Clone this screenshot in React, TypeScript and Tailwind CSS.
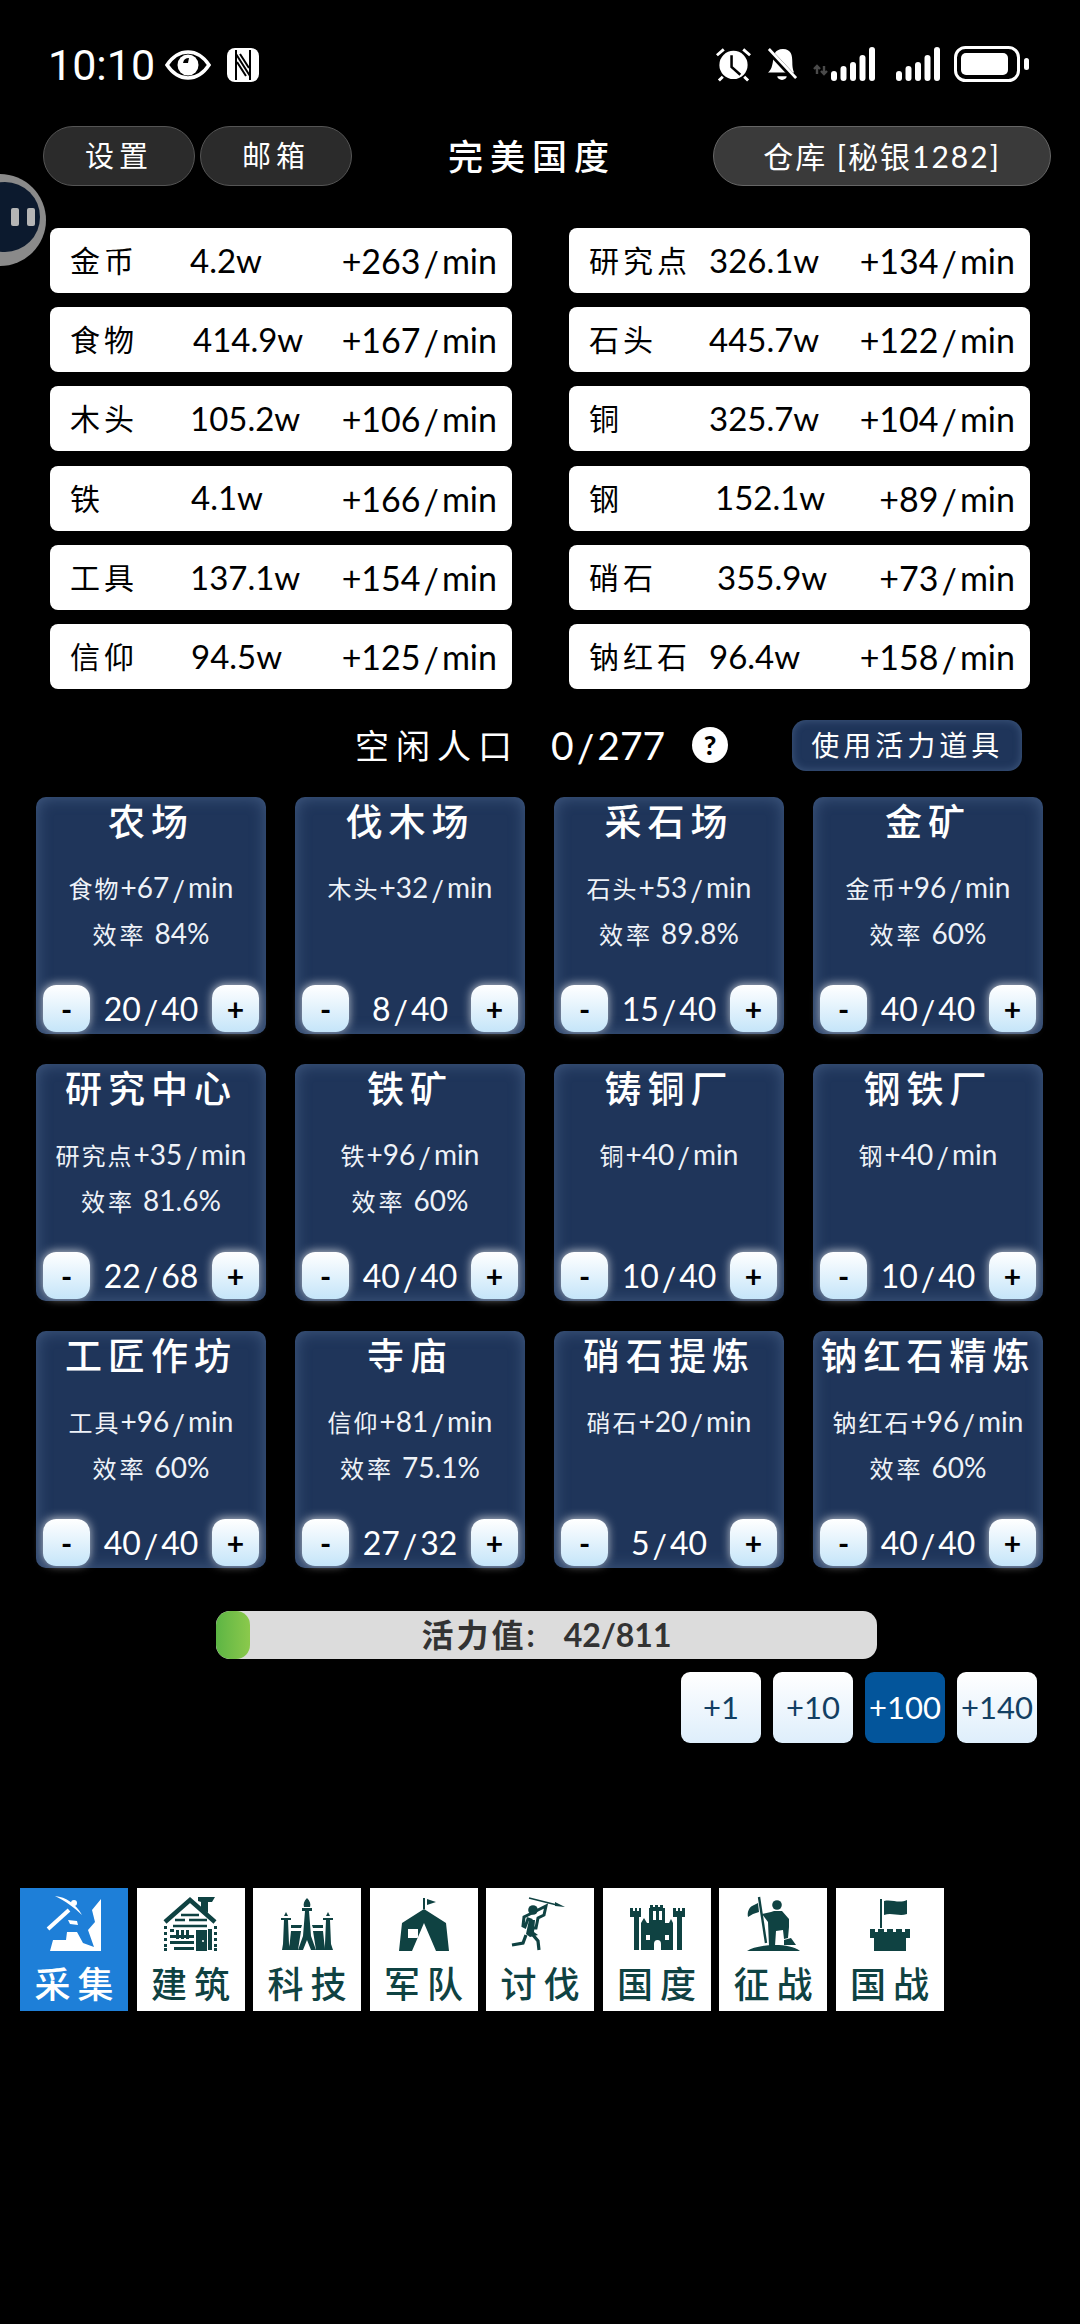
const FONT = "font-['Lato','Noto_Sans_CJK_SC',sans-serif]";

const RESOURCES_LEFT = [
  { name: "金币", value: "4.2w", rate: "+263/min", offset: "w-[120px]" },
  { name: "食物", value: "414.9w", rate: "+167/min", offset: "w-[123px]" },
  { name: "木头", value: "105.2w", rate: "+106/min", offset: "w-[120px]" },
  { name: "铁", value: "4.1w", rate: "+166/min", offset: "w-[121px]" },
  { name: "工具", value: "137.1w", rate: "+154/min", offset: "w-[120px]" },
  { name: "信仰", value: "94.5w", rate: "+125/min", offset: "w-[121px]" },
];

const RESOURCES_RIGHT = [
  { name: "研究点", value: "326.1w", rate: "+134/min", offset: "w-[120px]" },
  { name: "石头", value: "445.7w", rate: "+122/min", offset: "w-[120px]" },
  { name: "铜", value: "325.7w", rate: "+104/min", offset: "w-[120px]" },
  { name: "钢", value: "152.1w", rate: "+89/min", offset: "w-[126px]" },
  { name: "硝石", value: "355.9w", rate: "+73/min", offset: "w-[128px]" },
  { name: "钠红石", value: "96.4w", rate: "+158/min", offset: "w-[120px]" },
];

const BUILDINGS = [
  { title: "农场", res: "食物", rate: "+67/min", eff: "84%", count: "20/40" },
  { title: "伐木场", res: "木头", rate: "+32/min", count: "8/40" },
  { title: "采石场", res: "石头", rate: "+53/min", eff: "89.8%", count: "15/40" },
  { title: "金矿", res: "金币", rate: "+96/min", eff: "60%", count: "40/40" },
  { title: "研究中心", res: "研究点", rate: "+35/min", eff: "81.6%", count: "22/68" },
  { title: "铁矿", res: "铁", rate: "+96/min", eff: "60%", count: "40/40" },
  { title: "铸铜厂", res: "铜", rate: "+40/min", count: "10/40" },
  { title: "钢铁厂", res: "钢", rate: "+40/min", count: "10/40" },
  { title: "工匠作坊", res: "工具", rate: "+96/min", eff: "60%", count: "40/40" },
  { title: "寺庙", res: "信仰", rate: "+81/min", eff: "75.1%", count: "27/32" },
  { title: "硝石提炼", res: "硝石", rate: "+20/min", count: "5/40" },
  { title: "钠红石精炼", res: "钠红石", rate: "+96/min", eff: "60%", count: "40/40" },
];

// the slash in the reference sits wide and dips under the baseline
function Slashed({ text }: { text: string }) {
  const [a, b] = text.split("/");
  return (
    <>
      {a}
      <span className="mx-[3px] inline-block translate-y-[3px]">/</span>
      {b}
    </>
  );
}

function EyeIcon() {
  return (
    <svg width="46" height="30" viewBox="0 0 46 30">
      <path d="M2 15C8 6 15 2 23 2s15 4 21 13c-6 9-13 13-21 13S8 24 2 15z" fill="none" stroke="#fff" strokeWidth="3.5" />
      <circle cx="23" cy="15" r="10.5" fill="#fff" />
      <path d="M18 13a6 6 0 0 1 6-5l-1 5z" fill="#000" />
    </svg>
  );
}

function NfcIcon() {
  return (
    <svg width="32" height="34" viewBox="0 0 32 34">
      <rect width="32" height="34" rx="8" fill="#fff" />
      <path d="M9 2v30M23 2v30M9 6l14 22M10 14l9 14M22 20l-9-14" stroke="#000" strokeWidth="2" fill="none" />
    </svg>
  );
}

function AlarmIcon() {
  return (
    <svg width="37" height="36" viewBox="0 0 38 36">
      <circle cx="19" cy="19" r="14.5" fill="#fff" />
      <path d="M17 9v12l9 8" stroke="#000" strokeWidth="2.6" fill="none" />
      <path d="M2 9l7-6M36 9l-7-6M8 31l-4 4M30 31l4 4" stroke="#fff" strokeWidth="3" fill="none" />
    </svg>
  );
}

function BellIcon() {
  return (
    <svg width="30" height="36" viewBox="0 0 32 36">
      <path d="M7 10c0 0 1-8 10-8s10 7 10 14c0 6 1 9 2 11H1c3-2 5-6 6-17z" fill="#fff" />
      <path d="M11 31h10a5 4 0 0 1-10 0z" fill="#fff" />
      <path d="M1 3l29 31" stroke="#000" strokeWidth="6" />
      <path d="M2 2l29 31" stroke="#fff" strokeWidth="3" />
    </svg>
  );
}

function SignalBars({ arrows }: { arrows?: boolean }) {
  const bars = [
    { x: 0, h: 10 },
    { x: 9.5, h: 15 },
    { x: 19, h: 19 },
    { x: 28.5, h: 26 },
    { x: 38, h: 34 },
  ];
  const left = arrows ? 18 : 0;
  return (
    <svg width={left + 44} height="36" viewBox={`0 0 ${left + 44} 36`}>
      {arrows && <path d="M4 28V20M1 23l3-3 3 3M11 20v8M8 25l3 3 3-3" stroke="#4a4a4a" strokeWidth="2.4" fill="none" />}
      {bars.map((b) => (
        <rect key={b.x} x={left + b.x} y={35 - b.h} width="6" height={b.h} rx="3" fill="#fff" />
      ))}
    </svg>
  );
}

function BatteryIcon() {
  return (
    <svg width="76" height="36" viewBox="0 0 76 36">
      <rect x="1.5" y="1.5" width="63" height="33" rx="10" fill="none" stroke="#fff" strokeWidth="3" />
      <rect x="7" y="7" width="47" height="22" rx="5" fill="#fff" />
      <rect x="70" y="12" width="5" height="12" rx="2.5" fill="#fff" />
    </svg>
  );
}

function PickIcon() {
  return (
    <svg width="108" height="66" viewBox="0 0 108 66" fill="#fff">
      <path d="M81 11V63H30L33 52H46L47 44H57L63 55L74 59L68 42L75 34L72 22z" />
      <path d="M35 8C46 9 56 16 62 27C55 20 45 13 35 8z" />
      <path d="M28 41L49 22" stroke="#fff" strokeWidth="4" />
      <circle cx="54" cy="15" r="3" />
      <path d="M48 32l9 1 1 4-8-1z" />
    </svg>
  );
}

const ICON_FILL = "#0f4242";

function HouseIcon() {
  return (
    <svg width="108" height="66" viewBox="0 0 108 66" fill={ICON_FILL}>
      <path d="M61 9h17l-3 5h-4v11l-7-5v-6l-3-1z" />
      <path d="M28 34L53 12l25 22" fill="none" stroke={ICON_FILL} strokeWidth="4.5" />
      <path d="M44 27h18M38 32h10M52 32h18M36 38h34" stroke={ICON_FILL} strokeWidth="2.6" />
      <path d="M27 38h3v3h-3zM27 44h3v3h-3zM27 50h3v3h-3zM27 56h3v3h-3zM27 60h3v3h-3zM77 38h3v3h-3zM77 44h3v3h-3zM77 50h3v3h-3zM77 56h3v3h-3zM77 60h3v3h-3z" />
      <path d="M33 41h4v3h-4zM33 47h24v3H33zM33 53h24v3H33zM37 59h20v3H37zM71 41h4v21h-4z" />
      <path d="M39 42h3v9h-3zM44 42h3v9h-3zM49 42h3v9h-3z" />
      <path d="M59 42h11v21H59z" />
      <circle cx="66" cy="53" r="1" fill="#fff" />
    </svg>
  );
}

function TempleIcon() {
  return (
    <svg width="108" height="66" viewBox="0 0 108 66" fill={ICON_FILL}>
      <path d="M54 10c3 3 4 6 3 9h-6c-1-3 0-6 3-9z" />
      <path d="M49 20h10v3h-10zM52 23h4l2 25 5 14h-5l-4-10-4 10h-5l5-14z" />
      <path d="M33 24l2 4h-4zM75 24l2 4h-4zM28 30h10v2H28zM70 30h10v2H70zM31 32h4l1 24 2 6h-9l1-6zM73 32h4l1 24 2 6h-9l1-6z" />
      <path d="M38 37h11l-1 3H38zM59 37h11v3H60zM38 43h10l-3 19H36zM60 43h10l2 19h-9z" />
    </svg>
  );
}

function TentIcon() {
  return (
    <svg width="108" height="66" viewBox="0 0 108 66" fill={ICON_FILL}>
      <path d="M53 10h2v11h-2zM57 11l9 3-9 3z" />
      <path fillRule="evenodd" d="M54 21L76 35L79 63H66L54 35L42 63H29L32 35zM38 41v9h10v-9z" />
    </svg>
  );
}

function WarriorIcon() {
  return (
    <svg width="108" height="66" viewBox="0 0 108 66" fill={ICON_FILL}>
      <path d="M43 10L71 17" stroke={ICON_FILL} strokeWidth="1.6" />
      <path d="M69 14l10 5-10-1z" />
      <circle cx="47" cy="22" r="4.8" />
      <path d="M60 18l-2 9-6 3-2 10h-6l1-8-3-1-3 8-2-1 1-9 6-3z" fill="none" stroke={ICON_FILL} strokeWidth="3" />
      <path d="M43 32h6l-1 12 4 3-8 2-4-3z" />
      <path d="M40 47l-3 8-11 2M47 47l5 6 1 9" fill="none" stroke={ICON_FILL} strokeWidth="3.2" />
    </svg>
  );
}

function CastleIcon() {
  return (
    <svg width="108" height="66" viewBox="0 0 108 66" fill={ICON_FILL}>
      <path fillRule="evenodd" d="M27 20h3v3h2v-3h2v3h2v-3h2v9h-2v33h-5V29h-4z" />
      <path fillRule="evenodd" d="M70 20h3v3h2v-3h2v3h2v-3h3v9h-3v33h-5V29h-4z" />
      <path fillRule="evenodd" d="M47 17h3v2h2v-2h3v2h2v-2h3v3h2v15h4l2-4 2 4v27H58v-6a3.5 4 0 0 0-7 0v6H38V35l3-5 3 5h2V20h1zM50 23v9h3v-9zM56 23v9h3v-9zM43 47v5h4v-5zM62 47v5h4v-5z" />
    </svg>
  );
}

function ConquestIcon() {
  return (
    <svg width="108" height="66" viewBox="0 0 108 66" fill={ICON_FILL}>
      <path d="M40 9l7 46" stroke={ICON_FILL} strokeWidth="2.4" />
      <path d="M39 15l1 9-6 2-5 3c-1-5 1-9 4-11z" />
      <circle cx="58" cy="17" r="4.8" />
      <path d="M43 26l9-2 3-1h8l7 8v8l-1 11-4 1-1-9-7 1-1 15h-6l-1-24z" />
      <path d="M65 52l7-2 5 7H65z" />
      <path d="M28 63c10-7 42-9 53 0z" />
    </svg>
  );
}

function FortIcon() {
  return (
    <svg width="108" height="66" viewBox="0 0 108 66" fill={ICON_FILL}>
      <path d="M44 11h2v29h-2z" />
      <path d="M48 13c8-2 15 3 23-1v14c-8 3-15-2-23 1z" />
      <path d="M34 41h5v3h3v-3h6v3h3v-3h6v3h3v-3h6v3h3v-3h5v9h-4v13H38V50h-4z" />
    </svg>
  );
}

const NAV_ITEMS = [
  { label: "采集", Icon: PickIcon, active: true },
  { label: "建筑", Icon: HouseIcon },
  { label: "科技", Icon: TempleIcon },
  { label: "军队", Icon: TentIcon },
  { label: "讨伐", Icon: WarriorIcon },
  { label: "国度", Icon: CastleIcon },
  { label: "征战", Icon: ConquestIcon },
  { label: "国战", Icon: FortIcon },
];

function ResourceRow({ item }: { item: (typeof RESOURCES_LEFT)[number] }) {
  return (
    <div className="flex h-[65px] items-center rounded-[8px] bg-white pl-[20px] pr-[15px] text-black">
      <div className={`${item.offset} shrink-0 whitespace-nowrap text-[30px] tracking-[4px]`}>{item.name}</div>
      <div className="text-[33px]">{item.value}</div>
      <div className="ml-auto whitespace-nowrap text-[34px]">
        <Slashed text={item.rate} />
      </div>
    </div>
  );
}

function StepButton({ label }: { label: string }) {
  return (
    <button className="flex h-[47px] w-[47px] shrink-0 items-center justify-center rounded-[13px] bg-gradient-to-b from-white to-[#c5e5f9] text-[30px] font-bold leading-none text-black shadow-[0_-1px_10px_rgba(255,255,255,0.7)]">
      {label}
    </button>
  );
}

function BuildingCard({ b }: { b: (typeof BUILDINGS)[number] }) {
  return (
    <div className="flex h-[237px] w-[230px] flex-col rounded-[10px] bg-[#1f355a] px-[7px] pb-[1px] text-white shadow-[inset_0_0_16px_rgba(120,150,190,0.4)]">
      <div className="-mx-[7px] h-[50px] whitespace-nowrap text-center text-[37px] font-medium leading-[50px] tracking-[6px]">
        {b.title}
      </div>
      <div className="mt-[17px] h-[46px] whitespace-nowrap text-center leading-[46px] text-[#eef2f8]">
        <span className="text-[24px] tracking-[2px]">{b.res}</span>
        <span className="text-[28px]">
          <Slashed text={b.rate} />
        </span>
      </div>
      {b.eff && (
        <div className="h-[46px] whitespace-nowrap text-center leading-[46px] text-[#eef2f8]">
          <span className="text-[24px] tracking-[3px]">效率</span>
          <span className="ml-[8px] text-[28px]">{b.eff}</span>
        </div>
      )}
      <div className="mt-auto flex items-center justify-between">
        <StepButton label="-" />
        <span className="text-[32px]">
          <Slashed text={b.count} />
        </span>
        <StepButton label="+" />
      </div>
    </div>
  );
}

function AmountButton({ label, active }: { label: string; active?: boolean }) {
  return (
    <button
      className={
        active
          ? "flex h-[71px] w-[80px] items-center justify-center rounded-[9px] bg-[#03559b] text-[31px] text-white"
          : "flex h-[71px] w-[80px] items-center justify-center rounded-[9px] bg-gradient-to-b from-white to-[#deeefb] text-[31px] text-[#123f63]"
      }
    >
      {label}
    </button>
  );
}

export default function App() {
  return (
    <div className={`${FONT} relative h-[2324px] w-[1080px] overflow-hidden bg-black text-white`}>
      {/* floating assistant ball */}
      <div className="absolute left-[-46px] top-[174px] h-[92px] w-[92px] rounded-full bg-[#8a8a8a]">
        <div className="absolute left-[16px] top-[8px] flex h-[70px] w-[70px] items-center justify-center gap-[8px] rounded-full bg-[#0c1a2e] pl-[36px]">
          <span className="h-[18px] w-[8px] rounded-[2px] bg-[#b5b5b5]" />
          <span className="h-[18px] w-[8px] rounded-[2px] bg-[#b5b5b5]" />
        </div>
      </div>

      {/* status bar */}
      <div className="flex h-[126px] items-start justify-between pl-[48px] pr-[50px] pt-[46px]">
        <div className="flex items-center">
          <span className="font-['Roboto'] text-[43px] leading-[38px]">10:10</span>
          <span className="ml-[10px]">
            <EyeIcon />
          </span>
          <span className="ml-[16px]">
            <NfcIcon />
          </span>
        </div>
        <div className="flex items-center">
          <AlarmIcon />
          <span className="ml-[15px]">
            <BellIcon />
          </span>
          <span className="ml-[16px]">
            <SignalBars arrows />
          </span>
          <span className="ml-[21px]">
            <SignalBars />
          </span>
          <span className="ml-[14px]">
            <BatteryIcon />
          </span>
        </div>
      </div>

      {/* header */}
      <div className="flex h-[60px] items-center pl-[43px]">
        <button className="h-[60px] w-[152px] rounded-[30px] border border-[#555] bg-[#2b2b2b] text-[29px] tracking-[5px]">设置</button>
        <button className="ml-[5px] h-[60px] w-[152px] rounded-[30px] border border-[#555] bg-[#2b2b2b] text-[29px] tracking-[5px]">邮箱</button>
        <div className="ml-[96px] w-[170px] whitespace-nowrap text-[35px] font-medium tracking-[7px]">完美国度</div>
        <button className="ml-[95px] h-[60px] w-[338px] whitespace-nowrap rounded-[30px] border border-[#666] bg-[#3a3a3a] text-[30px] tracking-[2px]">仓库 [秘银1282]</button>
      </div>

      {/* resources */}
      <div className="mt-[42px] grid grid-cols-[462px_461px] gap-x-[57px] pl-[50px]">
        <div className="flex flex-col gap-y-[14.2px]">
          {RESOURCES_LEFT.map((item) => (
            <ResourceRow key={item.name} item={item} />
          ))}
        </div>
        <div className="flex flex-col gap-y-[14.2px]">
          {RESOURCES_RIGHT.map((item) => (
            <ResourceRow key={item.name} item={item} />
          ))}
        </div>
      </div>

      {/* idle population */}
      <div className="mt-[31px] flex h-[51px] items-center pl-[355px]">
        <span className="w-[196px] text-[34px] tracking-[7px]">空闲人口</span>
        <span className="text-[39px]">
          <Slashed text="0/277" />
        </span>
        <span className="ml-[27px] flex h-[36px] w-[36px] items-center justify-center rounded-full bg-white text-[27px] font-black text-black">?</span>
        <button className="ml-[64px] h-[51px] w-[230px] whitespace-nowrap rounded-[14px] bg-[#1f355a] text-[28px] tracking-[4px] shadow-[inset_0_0_8px_rgba(120,150,190,0.4)]">使用活力道具</button>
      </div>

      {/* buildings */}
      <div className="mt-[26px] grid grid-cols-[repeat(4,230px)] gap-x-[29px] gap-y-[30px] pl-[36px]">
        {BUILDINGS.map((b) => (
          <BuildingCard key={b.title} b={b} />
        ))}
      </div>

      {/* energy bar */}
      <div className="relative ml-[216px] mt-[43px] flex h-[48px] w-[661px] items-center justify-center overflow-hidden rounded-[14px] bg-[#dcdcdc]">
        <div className="absolute left-0 top-0 h-full w-[34px] rounded-[14px] bg-gradient-to-r from-[#5cb544] to-[#8bc94c]" />
        <span className="whitespace-nowrap font-bold text-[#333]">
          <span className="text-[32px] tracking-[3px]">活力值:</span>
          <span className="ml-[26px] text-[32px]">42/811</span>
        </span>
      </div>
      <div className="mt-[13px] flex gap-x-[12px] pl-[681px]">
        <AmountButton label="+1" />
        <AmountButton label="+10" />
        <AmountButton label="+100" active />
        <AmountButton label="+140" />
      </div>

      {/* bottom nav */}
      <div className="mt-[145px] flex gap-x-[8.5px] pl-[20px]">
        {NAV_ITEMS.map(({ label, Icon, active }) => (
          <div
            key={label}
            className={
              active
                ? "flex h-[123px] w-[108px] flex-col items-center bg-[#1e7fd8] text-white"
                : "flex h-[123px] w-[108px] flex-col items-center bg-white text-[#0f4242]"
            }
          >
            <Icon />
            <span className="mt-[7px] whitespace-nowrap pl-[7px] text-[36px] font-medium leading-[46px] tracking-[7px]">{label}</span>
          </div>
        ))}
      </div>
    </div>
  );
}
